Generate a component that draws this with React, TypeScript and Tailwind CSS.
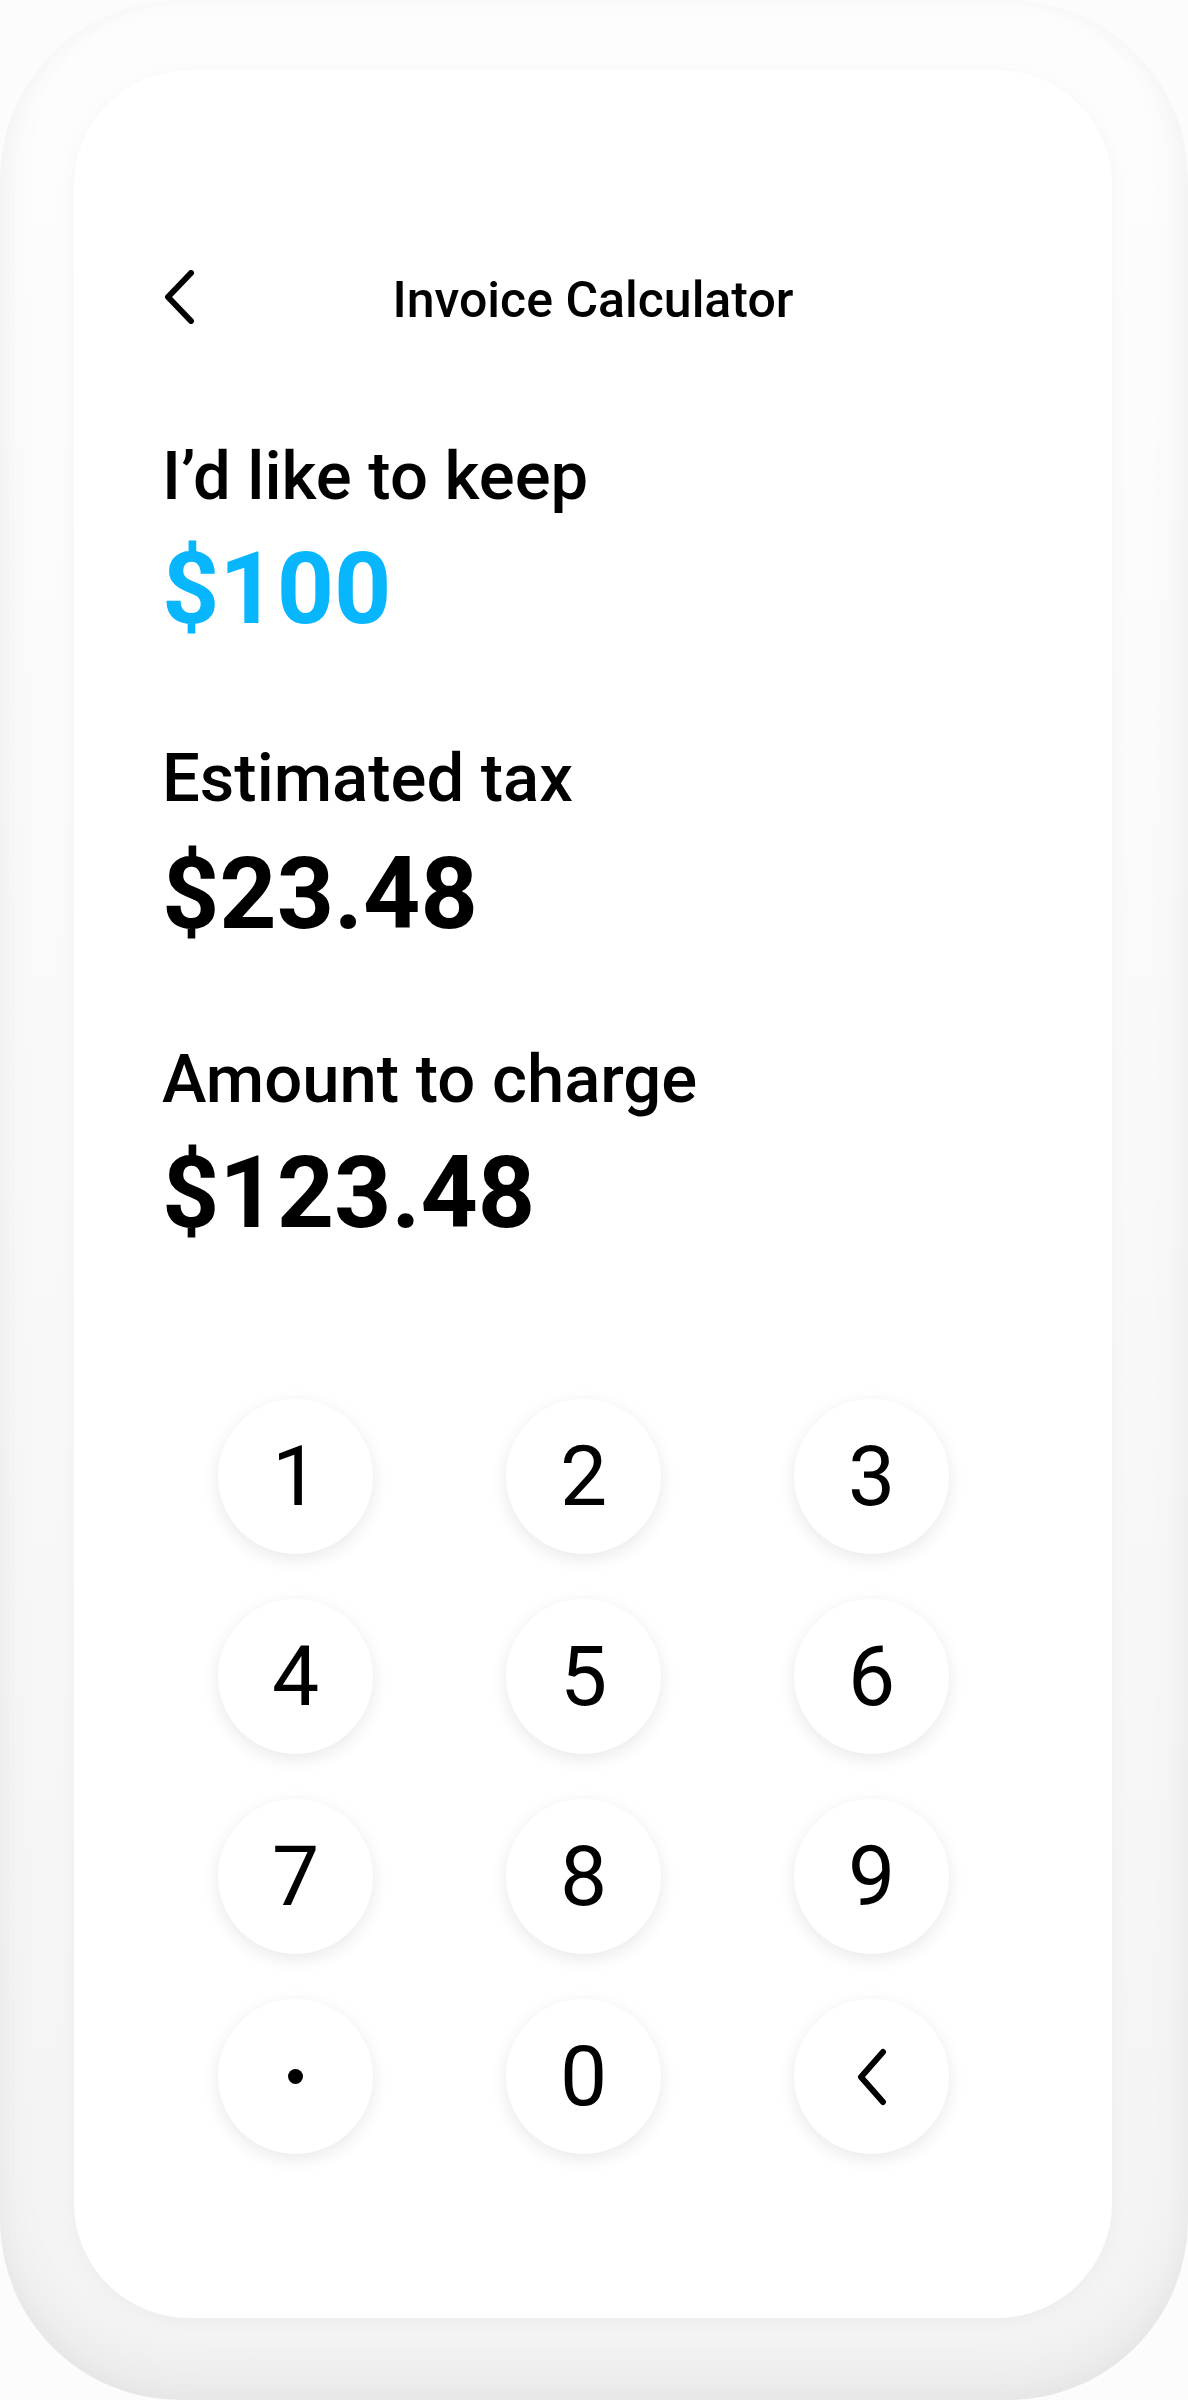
import React from "react";

const FONT = { fontFamily: "Roboto, 'Open Sans', Arial, sans-serif" };

function Chevron({ className = "" }: { className?: string }) {
  return (
    <svg className={className} width="36" height="54" viewBox="0 0 36 54" fill="none">
      <path d="M29 3 L6 27 L29 51" stroke="#000" strokeWidth="6" strokeLinecap="round" strokeLinejoin="round" />
    </svg>
  );
}

function Key({ children }: { children: React.ReactNode }) {
  return (
    <button className="flex h-[155px] w-[155px] items-center justify-center rounded-full bg-white text-[84px] font-normal leading-none text-black shadow-[0_5px_18px_rgba(0,0,0,0.09)]">
      {children}
    </button>
  );
}

export default function App() {
  const digits = ["1", "2", "3", "4", "5", "6", "7", "8", "9"];
  return (
    <div className="h-[2400px] w-[1188px] bg-[#fcfcfc]" style={FONT}>
      <div className="h-[2400px] w-[1188px] rounded-[180px] bg-[linear-gradient(180deg,#fdfdfd_0%,#f9f9f9_50%,#f3f3f3_100%)] pb-[82px] pl-[74px] pr-[76px] pt-[70px] shadow-[inset_0_-30px_50px_rgba(0,0,0,0.045),inset_0_0_26px_rgba(0,0,0,0.03)]">
        <div className="flex h-full flex-col rounded-[115px] bg-white pt-[205px] shadow-[0_4px_20px_rgba(0,0,0,0.03)]">
          <div className="grid w-full grid-cols-[1fr_auto_1fr] items-start">
            <div className="pl-[88px]">
              <Chevron className="-mt-[5px]" />
            </div>
            <h1 className="text-[50px] font-medium leading-none text-black">Invoice Calculator</h1>
            <div />
          </div>

          <div className="flex flex-col pl-[88px]">
            <div className="mt-[118px] text-[67px] font-medium leading-none text-black">I’d like to keep</div>
            <div className="mt-[29px] text-[100px] font-bold leading-none text-[#08b6fd]">$100</div>

            <div className="mt-[106px] text-[67px] font-medium leading-none text-black">Estimated tax</div>
            <div className="mt-[32px] text-[100px] font-bold leading-none text-black">$23.48</div>

            <div className="mt-[102px] text-[67px] font-medium leading-none text-black">Amount to charge</div>
            <div className="mt-[30px] text-[100px] font-bold leading-none text-black">$123.48</div>
          </div>

          <div className="ml-[144px] mt-[156px] grid grid-cols-[repeat(3,155px)] gap-x-[133px] gap-y-[45px]">
            {digits.map((d) => (
              <Key key={d}>{d}</Key>
            ))}
            <Key>
              <span className="block h-[15px] w-[15px] rounded-full bg-black" />
            </Key>
            <Key>0</Key>
            <Key>
              <svg width="34" height="58" viewBox="0 0 34 58" fill="none">
                <path d="M28 4 L6 29 L28 54" stroke="#000" strokeWidth="6" strokeLinecap="round" strokeLinejoin="round" />
              </svg>
            </Key>
          </div>
        </div>
      </div>
    </div>
  );
}
